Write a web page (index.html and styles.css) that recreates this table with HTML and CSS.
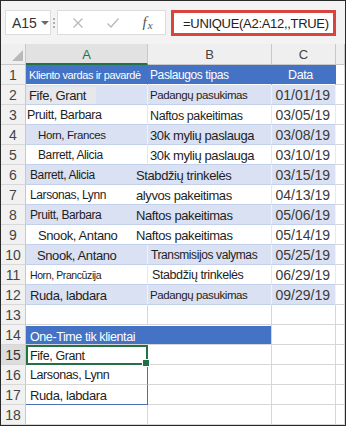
FILE: index.html
```html
<!DOCTYPE html>
<html>
<head>
<meta charset="utf-8">
<link rel="stylesheet" href="styles.css">
</head>
<body>
<div class="frame">
  <div class="fbar">
    <div class="namebox"><span>A15</span><span class="caret"></span></div>
    <div class="dots"><i></i><i></i><i></i></div>
    <div class="btns">
      <span class="slot"><svg width="12" height="12" viewBox="0 0 12 12"><path d="M1.5 1.5 L10.5 10.5 M10.5 1.5 L1.5 10.5" stroke="#b8b8b8" stroke-width="1.3" fill="none"/></svg></span>
      <span class="slot"><svg width="14" height="12" viewBox="0 0 14 12"><path d="M1.5 6.5 L5 10 L12.5 1.5" stroke="#b8b8b8" stroke-width="1.3" fill="none"/></svg></span>
      <span class="slot fx"><span class="f">f</span><span class="x">x</span></span>
    </div>
    <div class="formula">=UNIQUE(A2:A12,,TRUE)</div>
  </div>
  <div class="sheet">
    <div class="corner"><span class="tri"></span></div>
    <div class="h sel">A</div>
    <div class="h">B</div>
    <div class="h">C</div>
    <div class="h"></div>

    <div class="rn">1</div>
    <div class="c tb f11 pl3">Kliento vardas ir pavardė</div>
    <div class="c tb f12 pl2">Paslaugos tipas</div>
    <div class="c tb f125 ctr">Data</div>
    <div class="c"></div>

    <div class="rn">2</div>
    <div class="c tl"><span class="patch f13">Fife, Grant</span></div>
    <div class="c tl f115 pl2">Padangų pasukimas</div>
    <div class="c tl date">01/01/19</div>
    <div class="c"></div>

    <div class="rn">3</div>
    <div class="c tw f125 pl1">Pruitt, Barbara</div>
    <div class="c tw f125 pl2 low">Naftos pakeitimas</div>
    <div class="c tw date">03/05/19</div>
    <div class="c"></div>

    <div class="rn">4</div>
    <div class="c tl f115 pl12">Horn, Frances</div>
    <div class="c tl f13 pl2">30k mylių paslauga</div>
    <div class="c tl date">03/08/19</div>
    <div class="c"></div>

    <div class="rn">5</div>
    <div class="c tw f12 pl12">Barrett, Alicia</div>
    <div class="c tw f13 pl2">30k mylių paslauga</div>
    <div class="c tw date">03/10/19</div>
    <div class="c"></div>

    <div class="rn">6</div>
    <div class="c tl f12 pl4">Barrett, Alicia</div>
    <div class="c tl f13 back">Stabdžių trinkelės</div>
    <div class="c tl date">03/15/19</div>
    <div class="c"></div>

    <div class="rn">7</div>
    <div class="c tw f12 pl4">Larsonas, Lynn</div>
    <div class="c tw f13 back">alyvos pakeitimas</div>
    <div class="c tw date">04/13/19</div>
    <div class="c"></div>

    <div class="rn">8</div>
    <div class="c tl f12 pl4">Pruitt, Barbara</div>
    <div class="c tl f13 back">Naftos pakeitimas</div>
    <div class="c tl date">05/06/19</div>
    <div class="c"></div>

    <div class="rn">9</div>
    <div class="c tw f13 pl12">Snook, Antano</div>
    <div class="c tw f13 back">Naftos pakeitimas</div>
    <div class="c tw date">05/14/19</div>
    <div class="c"></div>

    <div class="rn">10</div>
    <div class="c tl f13 pl11">Snook, Antano</div>
    <div class="c tl f12 pl3">Transmisijos valymas</div>
    <div class="c tl date">05/25/19</div>
    <div class="c"></div>

    <div class="rn">11</div>
    <div class="c tw f105 pl4">Horn, Prancūzija</div>
    <div class="c tw f125 pl4">Stabdžių trinkelės</div>
    <div class="c tw date">06/29/19</div>
    <div class="c"></div>

    <div class="rn">12</div>
    <div class="c tl f13 pl4">Ruda, labdara</div>
    <div class="c tl f115 pl2">Padangų pasukimas</div>
    <div class="c tl date">09/29/19</div>
    <div class="c"></div>

    <div class="rn">13</div>
    <div class="c"></div>
    <div class="c"></div>
    <div class="c"></div>
    <div class="c"></div>

    <div class="rn">14</div>
    <div class="c span2"><div class="bar">One-Time tik klientai</div></div>
    <div class="c"></div>
    <div class="c"></div>

    <div class="rn rsel">15</div>
    <div class="c active f125 pl2">Fife, Grant</div>
    <div class="c"></div>
    <div class="c"></div>
    <div class="c"></div>

    <div class="rn">16</div>
    <div class="c spill f125 pl4">Larsonas, Lynn</div>
    <div class="c"></div>
    <div class="c"></div>
    <div class="c"></div>

    <div class="rn">17</div>
    <div class="c spill last f13 pl4">Ruda, labdara</div>
    <div class="c"></div>
    <div class="c"></div>
    <div class="c"></div>

    <div class="rn">18</div>
    <div class="c"></div>
    <div class="c"></div>
    <div class="c"></div>
    <div class="c"></div>
  </div>
</div>
</body>
</html>
```

FILE: styles.css
```css
* { box-sizing: border-box; margin: 0; padding: 0; }
html, body { width: 346px; height: 426px; overflow: hidden; }
body { font-family: "Liberation Sans", Arial, sans-serif; color: #1e1e1e; }

.frame {
  width: 346px;
  height: 426px;
  border: 1px solid #2a2a2a;
  background: #f3f3f3;
  display: flex;
  flex-direction: column;
}

.fbar {
  height: 43px;
  flex: none;
  display: flex;
  align-items: flex-start;
  padding: 9px 0 0 4px;
}

.namebox {
  width: 46px;
  height: 25px;
  background: #fff;
  border: 1px solid #dcdcdc;
  display: flex;
  align-items: center;
  padding-left: 6px;
  gap: 4px;
  font-size: 14px;
  color: #333;
}
.caret {
  width: 0; height: 0;
  border-left: 4px solid transparent;
  border-right: 4px solid transparent;
  border-top: 4px solid #6a6a6a;
}

.dots {
  width: 6px;
  height: 25px;
  display: flex;
  flex-direction: column;
  justify-content: center;
  align-items: center;
  gap: 2px;
}
.dots i { display: block; width: 2px; height: 2px; background: #b0b0b0; }

.btns {
  width: 109px;
  height: 25px;
  background: #fff;
  border: 1px solid #dcdcdc;
  display: flex;
  align-items: center;
  padding-left: 2px;
}
.slot { width: 36px; display: flex; justify-content: center; align-items: center; }
.fx { font-family: "Liberation Serif", serif; font-style: italic; color: #555; }
.fx .f { font-size: 15px; }
.fx .x { font-size: 11px; margin-top: 4px; margin-left: 1px; }

.formula {
  margin-left: 5px;
  width: 165px;
  height: 26px;
  border: 3px solid #d8453e;
  background: #fff;
  display: flex;
  align-items: center;
  padding-left: 9px;
  font-size: 13px;
  letter-spacing: -0.3px;
  color: #222;
  white-space: nowrap;
}

.sheet {
  flex: 1;
  display: grid;
  grid-template-columns: 25px 122px 124px 64px 9px;
  grid-template-rows: 21px repeat(18, 20px);
  background: #fff;
}

.corner {
  background: #efefef;
  border-right: 1px solid #c8c8c8;
  border-bottom: 1px solid #c8c8c8;
  display: flex;
  align-items: flex-end;
  justify-content: flex-end;
  padding: 0 2px 3px 0;
}
.tri {
  width: 0; height: 0;
  border-left: 11px solid transparent;
  border-bottom: 11px solid #b9b9b9;
}

.h {
  background: #efefef;
  border-right: 1px solid #c8c8c8;
  border-bottom: 1px solid #c8c8c8;
  display: flex;
  align-items: center;
  justify-content: center;
  font-size: 13px;
  color: #444;
  padding-top: 1px;
}
.h.sel {
  background: #e2e2e2;
  color: #217346;
  border-bottom: 2px solid #217346;
}

.rn {
  background: #f1f1f1;
  border-right: 1px solid #c8c8c8;
  border-bottom: 1px solid #d8d8d8;
  display: flex;
  align-items: center;
  justify-content: center;
  font-size: 14px;
  color: #444;
  padding-top: 1px;
}
.rn.rsel { background: #dcdcdc; color: #333; }

.c {
  border-right: 1px solid #d6d6d6;
  border-bottom: 1px solid #d6d6d6;
  display: flex;
  align-items: center;
  white-space: nowrap;
  padding-top: 1px;
  min-width: 0;
  letter-spacing: -0.4px;
}

.tb { background: #4472c4; color: #fff; border-right-color: #4472c4; border-bottom-color: #ffffff; }
.tl { background: #d9e1f2; border-right-color: #eef2f9; border-bottom-color: #c2d0eb; }
.tw { background: #ffffff; border-right-color: #e2e8f4; border-bottom-color: #c2d0eb; }

.f105 { font-size: 10.5px; }
.f11 { font-size: 11px; }
.f115 { font-size: 11.5px; }
.f12 { font-size: 12px; }
.f125 { font-size: 12.5px; }
.f13 { font-size: 13px; }

.pl1 { padding-left: 1px; }
.pl2 { padding-left: 2px; }
.pl3 { padding-left: 3px; }
.pl4 { padding-left: 4px; }
.pl11 { padding-left: 11px; }
.pl12 { padding-left: 12px; }
.ctr { justify-content: center; padding-right: 6px; }
.low { align-items: flex-end; padding-bottom: 1px; }
.back { margin-left: -12px; padding-left: 0; position: relative; }

.patch {
  background: #e6e8ec;
  height: 17px;
  display: flex;
  align-items: center;
  padding: 0 10px 0 3px;
}

.date {
  justify-content: flex-end;
  padding-right: 5px;
  font-size: 14px;
  letter-spacing: 0;
  color: #3a3a3a;
}

.span2 {
  grid-column: span 2;
  align-items: flex-start;
  padding-top: 1px;
}
.bar {
  width: 100%;
  height: 18px;
  background: #4472c4;
  color: #fff;
  font-size: 12.5px;
  display: flex;
  align-items: center;
  padding-left: 4px;
  padding-top: 3px;
}

.active {
  border: 2px solid #217346;
  position: relative;
}
.active::after {
  content: "";
  position: absolute;
  right: -4px;
  bottom: -4px;
  width: 6px;
  height: 6px;
  background: #217346;
  border: 1px solid #fff;
}
.spill { border-right: 1px solid #4a6fb5; }
.spill.last { border-bottom: 1px solid #4a6fb5; }
```
